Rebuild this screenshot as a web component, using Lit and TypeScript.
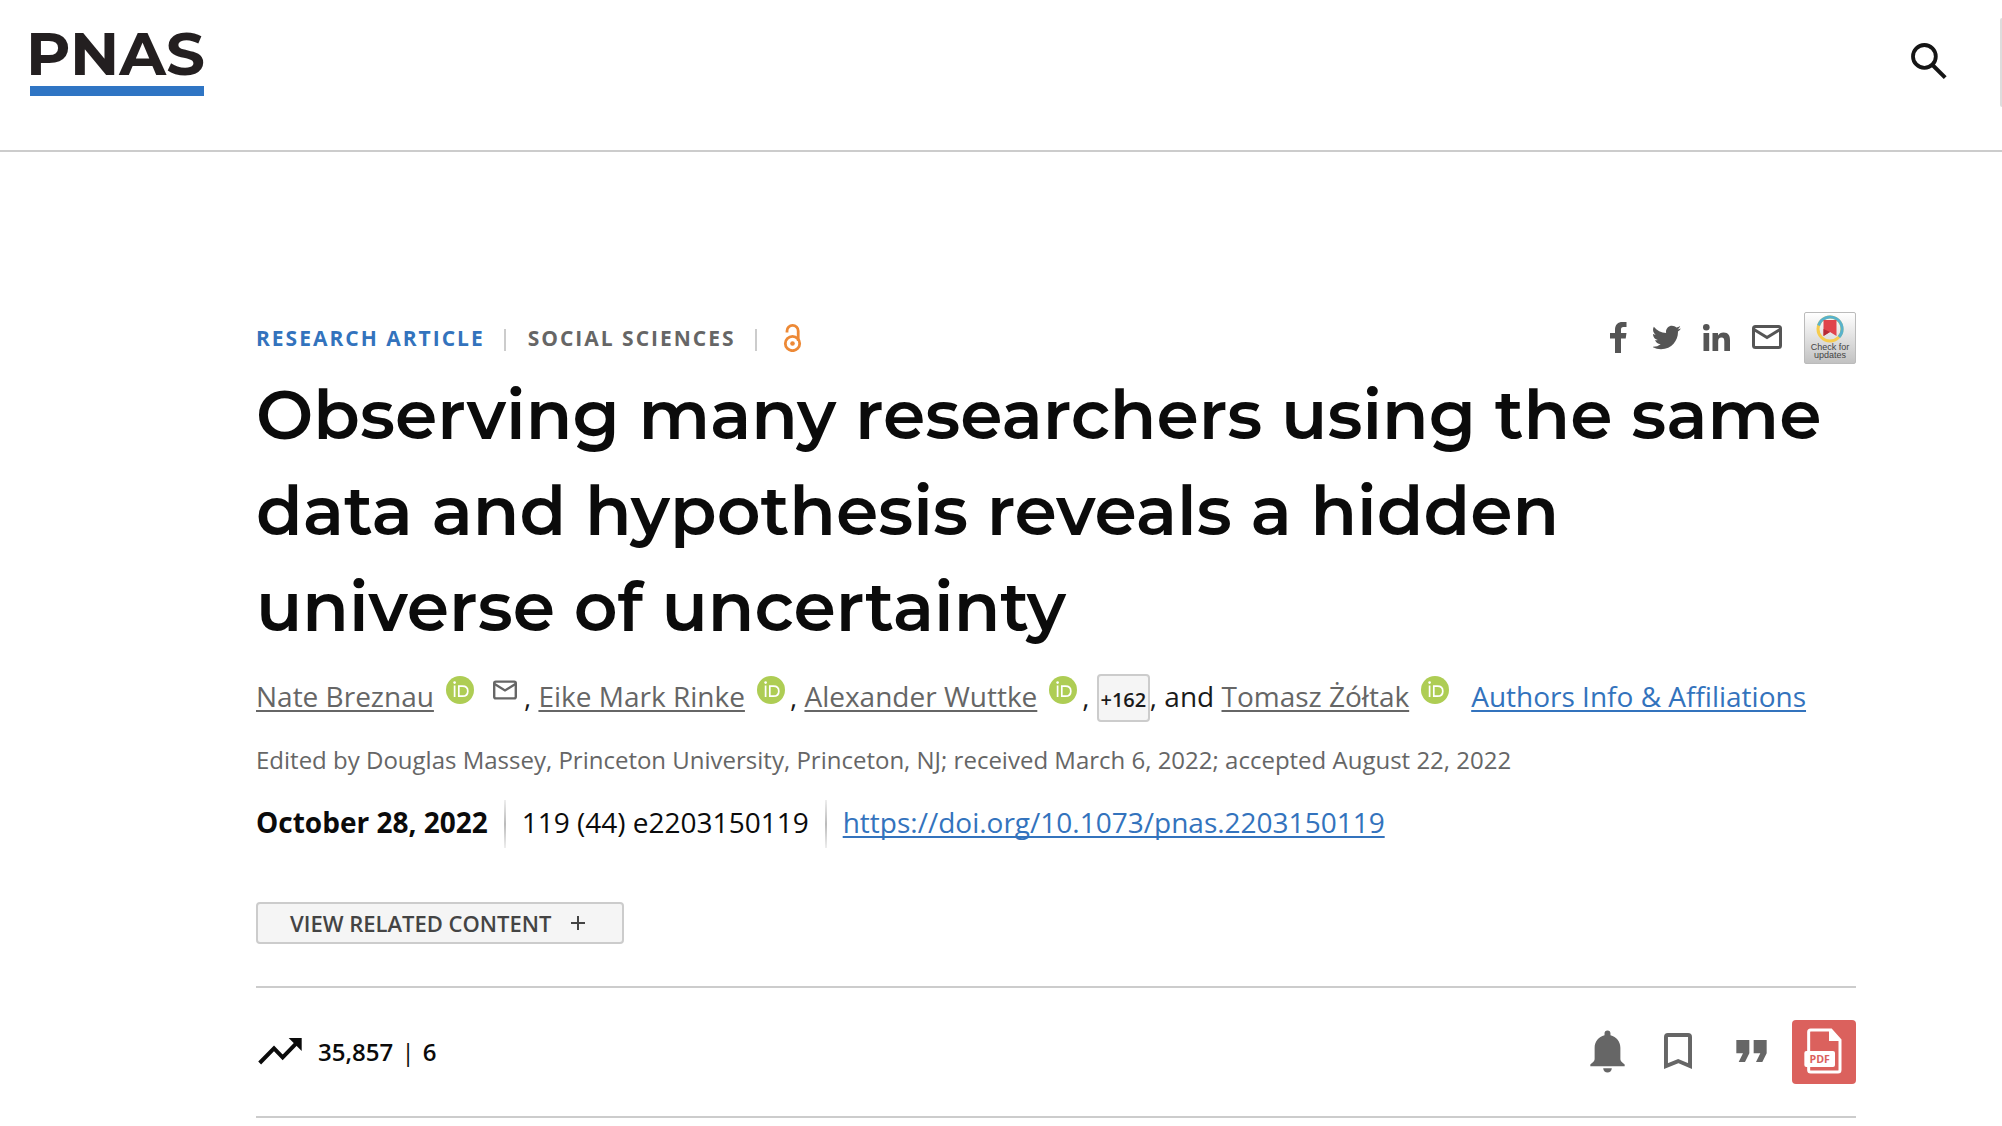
import { LitElement, html, css, svg } from "lit";
import { customElement, property } from "lit/decorators.js";

@customElement("orcid-badge")
class OrcidBadge extends LitElement {
  @property() name = "";

  static styles = css`
    :host { display: inline-block; width: 28px; height: 28px; margin: 0 5px 0 12px; vertical-align: 3px; }
    .link { display: block; }
    .icon { display: block; width: 28px; height: 28px; }
  `;

  render() {
    return html`<a class="link" href="#orcid" aria-label="ORCID of ${this.name}">
      <svg class="icon" viewBox="0 0 28 28" aria-hidden="true">
        <circle cx="14" cy="14" r="14" fill="#aecd54" />
        <circle cx="8.6" cy="6.6" r="1.3" fill="#fff" />
        <path d="M8.6 9.4V21M12.8 10.2h3.6c3.4 0 5.4 2 5.4 5s-2 5-5.4 5h-3.6z" fill="none" stroke="#fff" stroke-width="1.7" />
      </svg>
    </a>`;
  }
}

const mail = svg`
  <rect x="1.5" y="1.5" width="27" height="21" rx="2" fill="none" stroke="currentColor" stroke-width="3" />
  <path d="M2 4.5 15 12.5 28 4.5" fill="none" stroke="currentColor" stroke-width="3" />`;

@customElement("app-root")
class AppRoot extends LitElement {
  static styles = css`
    :host {
      display: block;
      background: #fff;
      color: #0b0b0b;
      font-family: "Open Sans", "Noto Sans", sans-serif;
      font-size: 28px;
    }
    *, *::before { box-sizing: border-box; }
    a { color: inherit; text-decoration: none; }
    button { font: inherit; color: inherit; cursor: pointer; margin: 0; }
    svg { display: block; }

    .header {
      display: flex;
      justify-content: space-between;
      align-items: flex-start;
      height: 152px;
      padding: 18px 0 0 30px;
      border-bottom: 2px solid #ccc;
      overflow: hidden;
    }
    .logo {
      width: 174px;
      font: 700 61px/70px Montserrat, Inter, sans-serif;
      text-indent: -4px;
      color: #231f20;
      border-bottom: 10px solid #2f75c4;
      height: 78px;
    }
    .tools { display: flex; align-items: flex-start; gap: 42px; }
    .search { border: 0; background: none; padding: 25px 11px 0 0; }
    .edge { width: 2px; height: 89px; background: #ddd; border-radius: 2px 0 0 2px; }

    .main { padding: 160px 146px 8px 256px; }
    .meta { display: flex; justify-content: space-between; align-items: center; height: 52px; }
    .kicker {
      display: flex;
      align-items: center;
      font-size: 21px;
      line-height: 30px;
      font-weight: 700;
      letter-spacing: 2px;
      color: #666;
    }
    .type { color: #3373bd; }
    .bar { width: 2px; height: 22px; margin: 3px 22px 0 19px; background: #ccc; }
    .share { display: flex; align-items: center; gap: 22px; color: #555; }
    .social { padding-bottom: 2px; }
    .check {
      display: flex;
      flex-direction: column;
      align-items: center;
      width: 52px;
      height: 52px;
      padding: 2px 0 0;
      border: 1px solid #bbb;
      border-radius: 2px;
      background: linear-gradient(#fff, #c2c2c2);
      font: 9px/8px "Liberation Sans", Arial, sans-serif;
      color: #444;
      text-align: center;
    }
    .title {
      margin: 3px 0 0;
      font: 600 68px/96px Montserrat, Inter, sans-serif;
    }
    .authors { margin: 17px 0 0; line-height: 48px; color: #1a1a1a; }
    .author, .info, .doi {
      text-decoration: underline;
      text-decoration-thickness: 2px;
      text-underline-offset: 3px;
      text-decoration-skip-ink: none;
    }
    .author { color: #666; }
    .info { color: #3373bd; margin-left: 17px; }
    .write { display: inline-block; margin: 0 7px 0 14px; vertical-align: 7px; color: #666; }
    .more {
      width: 53px;
      height: 48px;
      padding: 0;
      border: 2px solid #ccc;
      border-radius: 4px;
      background: #f5f5f5;
      font-size: 20px;
      font-weight: 600;
    }
    .edited { margin: 21px 0 0; font-size: 24px; line-height: 34px; color: #666; }
    .issue { display: flex; align-items: center; margin-top: 23px; height: 48px; line-height: 42px; }
    .issue > span, .issue > a, .issue > time { padding-bottom: 4px; }
    .date { font-weight: 700; }
    .divider { width: 2px; height: 48px; margin: 0 16px; background: linear-gradient(#eee, #bbb, #eee); }
    .doi { color: #3373bd; }
    .related {
      display: flex;
      align-items: center;
      gap: 20px;
      height: 42px;
      margin-top: 54px;
      padding: 0 37px 0 32px;
      border: 2px solid #ccc;
      border-radius: 4px;
      background: #f5f5f5;
      color: #444;
      font-size: 22px;
      font-weight: 600;
    }
    .actions {
      display: flex;
      align-items: center;
      justify-content: space-between;
      height: 132px;
      margin-top: 42px;
      border: solid #ccc;
      border-width: 2px 0;
    }
    .metrics { display: flex; align-items: center; gap: 16px; padding: 0 0 2px 2px; font-size: 24px; font-weight: 600; }
    .pipe { margin: 0 2px; font-weight: 400; }
    .buttons { display: flex; align-items: center; color: #666; }
    .icon-button { display: block; border: 0; padding: 0 0 2px; background: none; }
    .bookmark { margin: 0 44px 0 39px; }
    .pdf {
      display: flex;
      align-items: center;
      justify-content: center;
      width: 64px;
      height: 64px;
      margin-left: 25px;
      border-radius: 4px;
      background: #db615d;
    }
    .pdf-label { font: 700 32px "Open Sans", sans-serif; }
  `;

  render() {
    return html`
      <header class="header">
        <a class="logo" href="#home">PNAS</a>
        <div class="tools">
          <button class="search" aria-label="Search">
            <svg width="36" height="37" viewBox="0 0 36 37" fill="none" stroke="#151515">
              <circle cx="13.4" cy="13.4" r="11.4" stroke-width="3.8" />
              <path d="M21.5 22 34.2 34.6" stroke-width="4" />
            </svg>
          </button>
          <div class="edge"></div>
        </div>
      </header>
      <main class="main">
        <div class="meta">
          <div class="kicker">
            <a class="type" href="#research">RESEARCH ARTICLE</a>
            <span class="bar"></span>
            <a href="#social">SOCIAL SCIENCES</a>
            <span class="bar"></span>
            <svg role="img" aria-label="Open access" width="28" height="28" viewBox="0 0 28 28" fill="none" stroke="#ed8936">
              <circle cx="13.5" cy="19.5" r="7.2" stroke-width="2.8" />
              <circle cx="13.5" cy="19.5" r="2.3" fill="#ed8936" stroke="none" />
              <path d="M8 8.500V7a5.600 5.600 0 0 1 11.200 0V17" stroke-width="2.800" />
            </svg>
          </div>
          <div class="share">
            <a class="social" href="#facebook" aria-label="Facebook">
              <svg width="21" height="31" viewBox="0 0 21 31"><path fill="currentColor" d="M5 31V16.500H0V11h5V8C5 2.600 8 0 12.500 0H16.500V5H13.500C11.500 5 11 6 11 7.500V11h5.500l-.8 5.500H11V31z" /></svg>
            </a>
            <a class="social" href="#twitter" aria-label="Twitter">
              <svg width="28" height="25" viewBox="2.4 4 20.1 17"><path fill="currentColor" d="M22.460 6c-.770.350-1.600.580-2.460.690.880-.530 1.560-1.370 1.880-2.380-.830.500-1.750.850-2.720 1.050C18.370 4.500 17.260 4 16 4c-2.350 0-4.270 1.920-4.270 4.290 0 .340.040.670.110.980C8.280 9.090 5.110 7.380 3 4.790c-.370.630-.580 1.370-.580 2.150 0 1.490.750 2.810 1.910 3.560-.710 0-1.370-.200-1.950-.500v.030c0 2.080 1.480 3.820 3.440 4.210a4.220 4.220 0 0 1-1.930.070 4.280 4.280 0 0 0 4 2.980 8.521 8.521 0 0 1-5.330 1.840c-.340 0-.680-.020-1.020-.060C3.440 20.290 5.700 21 8.120 21 16 21 20.330 14.460 20.330 8.790c0-.190 0-.370-.010-.560.840-.600 1.560-1.360 2.140-2.230z" /></svg>
            </a>
            <a class="social" href="#linkedin" aria-label="LinkedIn">
              <svg width="27" height="27" viewBox="0 0 27 27" fill="currentColor"><circle cx="3.300" cy="3.300" r="3.300" /><path d="M.5 9h5.700v18H.5zM9.500 9H15v2.500c1-1.800 3-3 5.500-3 5 0 6.500 3.200 6.500 7.700V27h-5.700v-9.500c0-2.500-.5-4-2.800-4-2.400 0-3.300 1.600-3.300 4V27H9.500z" /></svg>
            </a>
            <a class="social" href="#email" aria-label="Email"><svg width="30" height="24" viewBox="0 0 30 24">${mail}</svg></a>
            <a class="check" href="#updates">
              <svg width="28" height="28" viewBox="0 0 28 28" fill="none" aria-hidden="true">
                <circle cx="14" cy="14" r="12" stroke="#f6cc4e" stroke-width="3" />
                <path d="M2.600 10.500A12 12 0 1 1 23 22" stroke="#58b2cc" stroke-width="3" />
                <path d="M7.500 5h13v16l-6.500-4-6.500 4z" fill="#e0444c" />
                <path d="M7.500 14v7l6.500-4z" fill="#b52a36" />
              </svg>
              <span>Check for<br />updates</span>
            </a>
          </div>
        </div>
        <h1 class="title">Observing many researchers using the same data and hypothesis reveals a hidden universe of uncertainty</h1>
        <p class="authors">
          <a class="author" href="#breznau">Nate Breznau</a><orcid-badge name="Nate Breznau"></orcid-badge><a class="write" href="#write" aria-label="Email Nate Breznau"><svg width="24" height="20" viewBox="0 0 30 24">${mail}</svg></a>,
          <a class="author" href="#rinke">Eike Mark Rinke</a><orcid-badge name="Eike Mark Rinke"></orcid-badge>,
          <a class="author" href="#wuttke">Alexander Wuttke</a><orcid-badge name="Alexander Wuttke"></orcid-badge>,
          <button class="more">+162</button>, and
          <a class="author" href="#zoltak">Tomasz Żółtak</a><orcid-badge name="Tomasz Żółtak"></orcid-badge><a class="info" href="#affiliations">Authors Info &amp; Affiliations</a>
        </p>
        <p class="edited">Edited by Douglas Massey, Princeton University, Princeton, NJ; received March 6, 2022; accepted August 22, 2022</p>
        <div class="issue">
          <time class="date" datetime="2022-10-28">October 28, 2022</time>
          <i class="divider"></i>
          <span>119 (44) e2203150119</span>
          <i class="divider"></i>
          <a class="doi" href="https://doi.org/10.1073/pnas.2203150119">https://doi.org/10.1073/pnas.2203150119</a>
        </div>
        <button class="related">
          <span>VIEW RELATED CONTENT</span>
          <svg width="14" height="14" viewBox="0 0 14 14" aria-hidden="true"><path d="M7 0v14M0 7h14" stroke="#444" stroke-width="2" /></svg>
        </button>
        <div class="actions">
          <div class="metrics">
            <svg width="44" height="27" viewBox="55 205 132 81" aria-hidden="true">
              <path d="M60 280 103 236 129 263 172 219" fill="none" stroke="#0b0b0b" stroke-width="12" />
              <path d="M147 205h39v39z" fill="#0b0b0b" />
            </svg>
            <span>35,857 <span class="pipe">|</span> 6</span>
          </div>
          <div class="buttons">
            <button class="icon-button" aria-label="Alerts">
              <svg width="35" height="43" viewBox="88 181 106 129" fill="currentColor">
                <path d="M141 182c-6 0-9 4-9 9v5c-18 5-30 19-30 38v33c0 8-3 10-13 18v5h104v-5c-10-8-13-10-13-18v-33c0-19-12-33-30-38v-5c0-5-3-9-9-9z" />
                <path d="M128 296h26c0 17-26 17-26 0z" />
              </svg>
            </button>
            <button class="icon-button bookmark" aria-label="Bookmark">
              <svg width="28" height="36" viewBox="312 188 85 109">
                <path d="M318 288V200q0-6 6-6h61q6 0 6 6v88l-36-15z" fill="none" stroke="currentColor" stroke-width="12" />
              </svg>
            </button>
            <button class="icon-button" aria-label="Cite">
              <svg width="31" height="22" viewBox="527 210 93 66" fill="currentColor">
                <path d="M528 210h39v40l-13 26h-19l13-26h-20zM580 210h39v40l-13 26h-19l13-26h-20z" />
              </svg>
            </button>
            <a class="pdf" href="#pdf" aria-label="PDF">
              <svg width="64" height="64" viewBox="696 150 192 192">
                <path d="M746 298V186q0-6 6-6h61l27 30v90q0 6-6 6h-82q-6 0-6-6z" fill="none" stroke="#fff" stroke-width="9" />
                <path d="M807 178v35h34z" fill="#fff" />
                <rect x="733" y="243" width="92" height="48" rx="6" fill="#fff" />
                <text class="pdf-label" x="779" y="279" text-anchor="middle" fill="#db615d">PDF</text>
              </svg>
            </a>
          </div>
        </div>
      </main>
    `;
  }
}
